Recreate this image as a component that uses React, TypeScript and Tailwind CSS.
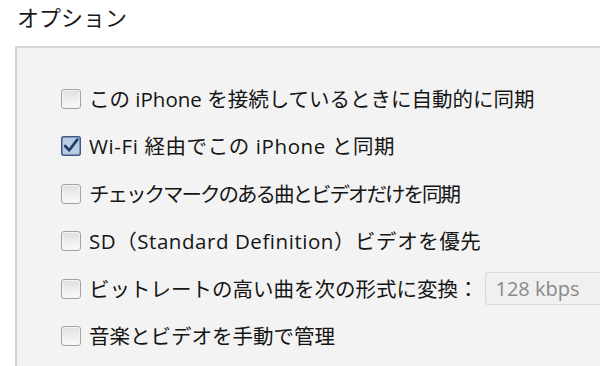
import React from 'react';

const font = { fontFamily: '"Open Sans", "Noto Sans CJK JP", "Noto Sans", sans-serif' };

const Checkbox = ({ checked }: { checked?: boolean }) => {
  if (checked) {
    return (
      <svg width="20" height="20" viewBox="0 0 20 20" className="shrink-0">
        <rect x="0.75" y="0.75" width="18.5" height="18.5" rx="2" fill="#b9cce4" stroke="#3c5a84" strokeWidth="1.5" />
        <path d="M4.2 10 L8.2 14.3 L16.3 3.6" fill="none" stroke="#1f3d6b" strokeWidth="2.7" strokeLinecap="round" strokeLinejoin="round" />
      </svg>
    );
  }
  return (
    <div className="w-[20px] h-[20px] shrink-0 rounded-[3px] border border-[#a3a3a3] bg-gradient-to-b from-[#e0e0e0] to-[#fafafa] shadow-[inset_0_0_0_1px_#f4f4f4]" />
  );
};

// per-row tracking: the original font packs kana tighter and sets latin wider
const Row = ({
  label,
  checked,
  track = '',
  children,
}: {
  label: string;
  checked?: boolean;
  track?: string;
  children?: React.ReactNode;
}) => (
  <div className="h-[47.5px] flex items-center">
    <Checkbox checked={checked} />
    <span className={'ml-[8px] text-[20.5px] text-[#151515] whitespace-nowrap leading-none ' + track}>
      {label}
    </span>
    {children}
  </div>
);

export default function App() {
  return (
    <div className="w-[600px] h-[366px] bg-white overflow-hidden" style={font}>
      <div className="pl-[17px] pt-[4px] h-[46px] text-[22px] text-[#1a1a1a] leading-[26px]">オプション</div>
      <div className="ml-[15px] h-[320px] border-2 border-r-0 border-b-0 border-[#d4d4d4] bg-[#f3f3f3] pl-[44px] pt-[27px]">
        <Row label="この iPhone を接続しているときに自動的に同期" />
        <Row label="Wi-Fi 経由でこの iPhone と同期" checked track="tracking-[0.6px]" />
        <Row label="チェックマークのある曲とビデオだけを同期" track="tracking-[-2px]" />
        <Row label="SD（Standard Definition）ビデオを優先" track="tracking-[0.55px]" />
        <Row label="ビットレートの高い曲を次の形式に変換：">
          <div className="ml-[6px] h-[33px] flex-1 flex items-center pl-[10px] rounded-l-[3px] border border-r-0 border-[#dadada] bg-[#f0f0f0] text-[20px] text-[#8a8a8a] whitespace-nowrap">
            128 kbps
          </div>
        </Row>
        <Row label="音楽とビデオを手動で管理" />
      </div>
    </div>
  );
}
